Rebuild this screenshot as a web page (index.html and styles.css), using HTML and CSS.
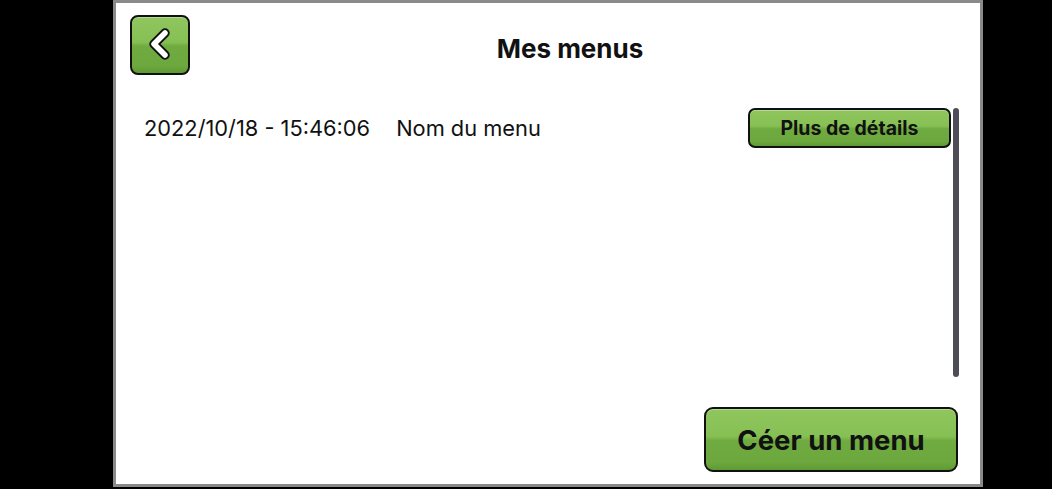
FILE: index.html
```html
<!DOCTYPE html>
<html lang="fr">
<head>
    <meta charset="UTF-8">
    <meta name="viewport" content="width=device-width, initial-scale=1.0">
    <title>Mes menus</title>
    <link rel="stylesheet" href="styles.css">
</head>
<body>
    <div class="screen">
        <div class="header">
            <button class="btn back-btn" type="button">
                <svg width="28" height="34" viewBox="0 0 28 34">
                    <path d="M19 5 L8 16 L19 27" fill="none" stroke="#111" stroke-width="9.5" stroke-linecap="round" stroke-linejoin="round"/>
                    <path d="M19 5 L8 16 L19 27" fill="none" stroke="#fff" stroke-width="5.5" stroke-linecap="round" stroke-linejoin="round"/>
                </svg>
            </button>
            <h2 class="title">Mes menus</h2>
        </div>

        <div class="list-wrap">
            <div class="list">
                <div class="menu-row">
                    <span class="menu-date">2022/10/18 - 15:46:06</span>
                    <span class="menu-name">Nom du menu</span>
                    <button class="btn details-btn" type="button">Plus de détails</button>
                </div>
            </div>
            <div class="scrollbar"></div>
        </div>

        <div class="footer">
            <button class="btn create-btn" type="button">Céer un menu</button>
        </div>
    </div>
</body>
</html>
```

FILE: styles.css
```css
body {
    margin: 0;
    padding: 0;
    background-color: #000;
    font-family: Inter, "Noto Sans", sans-serif;
    color: #111;
}
.screen {
    margin-left: 113px;
    width: 864px;
    height: 481px;
    border: 3px solid #8a8a8a;
    background: #fff;
    display: flex;
    flex-direction: column;
}
.btn {
    font-family: inherit;
    color: #111;
    border: 2px solid #111;
    border-radius: 7px;
    background: linear-gradient(#8fc65e 0%, #86c054 45%, #70ab41 52%, #6ca83d 88%, #5f9934 100%);
    box-shadow: inset 0 1px 0 rgba(255, 255, 255, 0.35);
    cursor: pointer;
    padding: 0;
}
.header {
    display: flex;
    align-items: center;
    padding: 12px 30px 0 14px;
}
.back-btn {
    width: 60px;
    height: 60px;
    border-radius: 8px;
    display: flex;
    align-items: center;
    justify-content: center;
}
.title {
    flex: 1;
    margin: 0;
    padding-top: 6px;
    text-align: center;
    font-size: 26px;
    font-weight: 700;
}
.list-wrap {
    display: flex;
    padding: 33px 21px 0 14px;
    height: 270px;
}
.list {
    flex: 1;
}
.menu-row {
    display: flex;
    align-items: center;
    height: 39px;
    padding-left: 14px;
    font-size: 21.8px;
}
.menu-date {
    margin-right: 26px;
}
.menu-name {
    flex: 1;
}
.details-btn {
    width: 203px;
    height: 40px;
    font-size: 19.5px;
    font-weight: 700;
}
.scrollbar {
    width: 6px;
    height: 269px;
    margin-left: 2px;
    background: #4d4d57;
    border-radius: 3px;
}
.footer {
    display: flex;
    justify-content: flex-end;
    padding: 29px 22px 0 0;
}
.create-btn {
    width: 254px;
    height: 65px;
    border-radius: 9px;
    font-size: 27.5px;
    font-weight: 700;
}
```
